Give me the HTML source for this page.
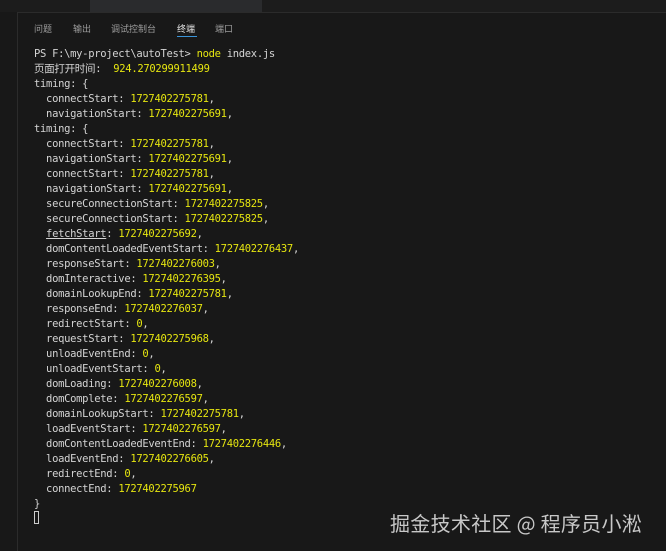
<!DOCTYPE html>
<html><head><meta charset="utf-8"><style>
html,body{margin:0;padding:0;width:666px;height:551px;overflow:hidden;background:#181818;}
body{position:relative;font-family:"Liberation Mono","Noto Sans CJK SC",monospace;}
.top{position:absolute;left:0;top:0;width:666px;height:12px;background:#1c1c1c;}
.tab{position:absolute;left:90px;top:0;width:172px;height:12px;background:#2a2b2d;}
.sep{position:absolute;left:17px;top:12px;width:649px;height:1px;background:#2b2b2b;}
.sep2{position:absolute;left:17px;top:12px;width:1px;height:539px;background:#2b2b2b;}
.ptabs{position:absolute;top:22px;left:34px;font:9px "Noto Sans CJK SC",sans-serif;color:#9d9d9d;}
.ptabs span{position:absolute;white-space:nowrap;}
.ul{position:absolute;left:177px;top:36px;width:20px;height:1px;background:#3a94d8;}
pre{position:absolute;left:34px;top:47px;margin:0;font-size:10.5px;letter-spacing:-0.3px;line-height:15px;color:#d4d4d4;}
.y{color:#e5e510;}
.c{position:absolute;left:34px;top:511px;width:5px;height:13px;border:1px solid #ccc;box-sizing:border-box;}
.wm{position:absolute;left:390px;top:508px;font:20px "Noto Sans CJK SC",sans-serif;color:#c8c8c8;white-space:nowrap;letter-spacing:0.3px;}
</style></head><body>
<div class="top"></div><div class="tab"></div><div class="sep"></div><div class="sep2"></div>
<div class="ptabs"><span style="left:0">问题</span><span style="left:39px">输出</span><span style="left:77px">调试控制台</span><span style="left:143px;color:#e0e0e0">终端</span><span style="left:181px">端口</span></div>
<div class="ul"></div>
<pre>PS F:\my-project\autoTest&gt; <span class="y">node</span> index.js
页面打开时间:  <span class="y">924.270299911499</span>
timing: {
  connectStart: <span class="y">1727402275781</span>,
  navigationStart: <span class="y">1727402275691</span>,
timing: {
  connectStart: <span class="y">1727402275781</span>,
  navigationStart: <span class="y">1727402275691</span>,
  connectStart: <span class="y">1727402275781</span>,
  navigationStart: <span class="y">1727402275691</span>,
  secureConnectionStart: <span class="y">1727402275825</span>,
  secureConnectionStart: <span class="y">1727402275825</span>,
  <u>fetchStart</u>: <span class="y">1727402275692</span>,
  domContentLoadedEventStart: <span class="y">1727402276437</span>,
  responseStart: <span class="y">1727402276003</span>,
  domInteractive: <span class="y">1727402276395</span>,
  domainLookupEnd: <span class="y">1727402275781</span>,
  responseEnd: <span class="y">1727402276037</span>,
  redirectStart: <span class="y">0</span>,
  requestStart: <span class="y">1727402275968</span>,
  unloadEventEnd: <span class="y">0</span>,
  unloadEventStart: <span class="y">0</span>,
  domLoading: <span class="y">1727402276008</span>,
  domComplete: <span class="y">1727402276597</span>,
  domainLookupStart: <span class="y">1727402275781</span>,
  loadEventStart: <span class="y">1727402276597</span>,
  domContentLoadedEventEnd: <span class="y">1727402276446</span>,
  loadEventEnd: <span class="y">1727402276605</span>,
  redirectEnd: <span class="y">0</span>,
  connectEnd: <span class="y">1727402275967</span>
}</pre>
<div class="c"></div>
<div class="wm">掘金技术社区 @ 程序员小淞</div>
</body></html>
